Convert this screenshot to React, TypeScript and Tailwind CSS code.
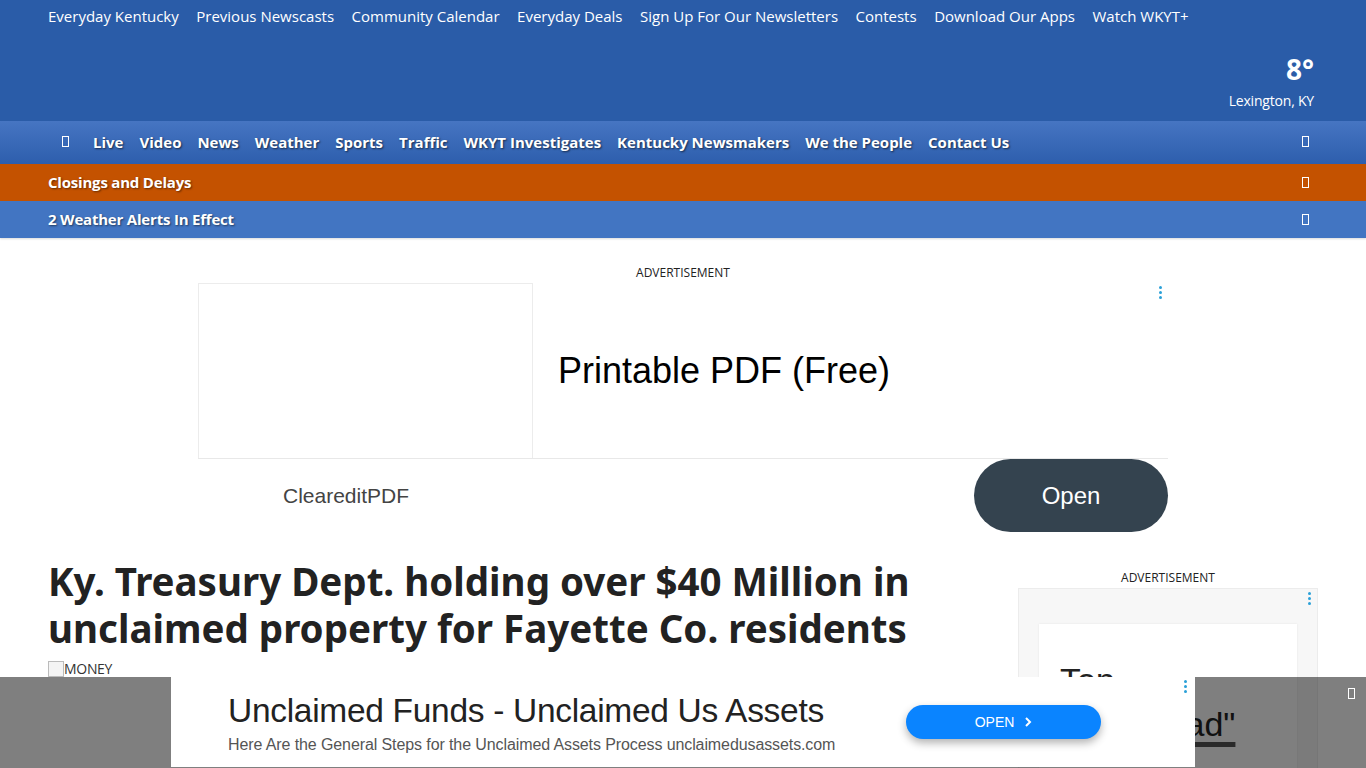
import React from 'react';

const topLinks = [
  'Everyday Kentucky',
  'Previous Newscasts',
  'Community Calendar',
  'Everyday Deals',
  'Sign Up For Our Newsletters',
  'Contests',
  'Download Our Apps',
  'Watch WKYT+',
];

const navLinks = [
  'Live',
  'Video',
  'News',
  'Weather',
  'Sports',
  'Traffic',
  'WKYT Investigates',
  'Kentucky Newsmakers',
  'We the People',
  'Contact Us',
];

function Tofu({ className = '' }: { className?: string }) {
  return <span className={`inline-block w-[7px] h-[11px] border border-white ${className}`} />;
}

function Dots() {
  return (
    <div className="flex flex-col gap-[2px] items-center">
      <span className="w-[3px] h-[3px] rounded-full bg-[#2aa0d8]" />
      <span className="w-[3px] h-[3px] rounded-full bg-[#2aa0d8]" />
      <span className="w-[3px] h-[3px] rounded-full bg-[#2aa0d8]" />
    </div>
  );
}

export default function App() {
  return (
    <div className="min-h-[768px] bg-white font-['Open_Sans',sans-serif] text-[#222]">
      {/* header */}
      <header className="bg-[#2a5ca8] h-[121px] px-[48px] relative">
        <div className="flex gap-[17.5px] pt-[5px] text-white text-[15px]">
          {topLinks.map((l) => (
            <a key={l} className="leading-[22px]">
              {l}
            </a>
          ))}
        </div>
        <div className="absolute right-[52px] top-[52px] flex flex-col items-end text-white">
          <span className="text-[28px] font-bold leading-[34px]">8°</span>
          <span className="text-[14px] leading-[16px] mt-[7px] tracking-[-0.2px]">Lexington, KY</span>
        </div>
      </header>

      <nav className="h-[43px] bg-gradient-to-b from-[#4675c2] to-[#2d5ead] flex items-center pl-[62px] pr-[57px] text-white font-bold text-[15px] [text-shadow:1px_1px_2px_rgba(0,0,0,0.6)]">
        <Tofu className="mr-[24px] mt-[-2px]" />
        <div className="flex gap-[16px]">
          {navLinks.map((l) => (
            <a key={l}>{l}</a>
          ))}
        </div>
        <Tofu className="ml-auto mt-[-3px]" />
      </nav>

      <div className="h-[37px] bg-[#c45200] flex items-center pl-[48px] pr-[57px] text-white font-bold text-[15px] tracking-[-0.2px] [text-shadow:1px_1px_2px_rgba(0,0,0,0.5)]">
        <span>Closings and Delays</span>
        <Tofu className="ml-auto" />
      </div>
      <div className="h-[37px] bg-[#4275c2] flex items-center pl-[48px] pr-[57px] text-white font-bold text-[15px] tracking-[-0.2px] [text-shadow:1px_1px_2px_rgba(0,0,0,0.5)] shadow-[0_1px_2px_rgba(0,0,0,0.15)]">
        <span>2 Weather Alerts In Effect</span>
        <Tofu className="ml-auto" />
      </div>

      {/* top ad */}
      <section className="flex flex-col items-center pt-[27px]">
        <div className="text-[12px] leading-[16px] text-[#222]">ADVERTISEMENT</div>
        <div className="w-[970px] mt-[2px] font-['Liberation_Sans',Arial,sans-serif]">
          <div className="flex h-[176px] border-b border-[#e8e8e8] relative">
            <div className="w-[335px] border border-[#ececec] border-b-0" />
            <div className="flex-1 flex items-center pl-[25px] text-[36px] text-black">Printable PDF (Free)</div>
            <div className="absolute right-[6px] top-[3px]">
              <Dots />
            </div>
          </div>
          <div className="flex items-center h-[73px]">
            <div className="pl-[85px] text-[21px] text-[#444]">ClearеditPDF</div>
            <button className="ml-auto w-[194px] h-[73px] rounded-full bg-[#34434f] text-white text-[24px]">Open</button>
          </div>
        </div>
      </section>

      {/* article */}
      <main className="flex px-[48px] pt-[26px] gap-[48px]">
        <div className="flex-1">
          <h1 className="font-['Noto_Sans',sans-serif] font-bold text-[38.5px] leading-[47px] text-[#222]">
            Ky. Treasury Dept. holding over $40 Million in
            <br />
            unclaimed property for Fayette Co. residents
          </h1>
          <div className="flex items-center mt-[6px] text-[14px] text-[#333] tracking-[-0.3px]">
            <span className="w-[16px] h-[16px] border border-[#bbb] bg-[#f4f4f4]" />
            MONEY
          </div>
        </div>
        <aside className="w-[300px] flex flex-col items-center pt-[12px]">
          <div className="text-[12px] leading-[16px]">ADVERTISEMENT</div>
          <div className="w-[300px] h-[200px] mt-[2px] bg-[#f7f7f7] border border-[#ececec] relative pt-[35px] px-[20px]">
            <div className="absolute right-[6px] top-[3px]">
              <Dots />
            </div>
            <div className="bg-white h-full shadow-[0_0_2px_rgba(0,0,0,0.08)] pt-[34px] px-[21px] font-['Liberation_Sans',Arial,sans-serif] text-[34px] text-[#222] leading-[44px]">
              <div>Top</div>
              <div className="pl-[70px]">
                <span className="underline decoration-[#555] decoration-[5px] underline-offset-[6px]">"Read"</span>
              </div>
            </div>
          </div>
        </aside>
      </main>

      {/* sticky bottom ad */}
      <div className="fixed left-0 right-0 bottom-0 h-[91px] bg-[rgba(0,0,0,0.5)] flex justify-center">
        <div className="w-[1024px] h-[90px] bg-white relative flex items-center font-['Liberation_Sans',Arial,sans-serif]">
          <div className="pl-[57px] pt-[5px] flex flex-col">
            <div className="text-[33.5px] leading-[36px] text-[#222] tracking-[-0.3px]">Unclaimed Funds - Unclaimed Us Assets</div>
            <div className="text-[16px] text-[#555] mt-[4px] tracking-[-0.1px]">
              Here Are the General Steps for the Unclaimed Assets Process unclaimedusassets.com
            </div>
          </div>
          <button className="absolute left-[735px] top-[28px] w-[195px] h-[34px] rounded-full bg-[#0a84ff] text-white text-[14px] shadow-[0_4px_8px_rgba(0,0,0,0.3)] flex items-center justify-center gap-[10px]">
            OPEN
            <svg width="8" height="10" viewBox="0 0 8 10">
              <path d="M2 1l4 4-4 4" stroke="white" strokeWidth="2" fill="none" />
            </svg>
          </button>
          <div className="absolute right-[8px] top-[3px]">
            <Dots />
          </div>
        </div>
        <Tofu className="absolute right-[11px] top-[11px]" />
      </div>
    </div>
  );
}
